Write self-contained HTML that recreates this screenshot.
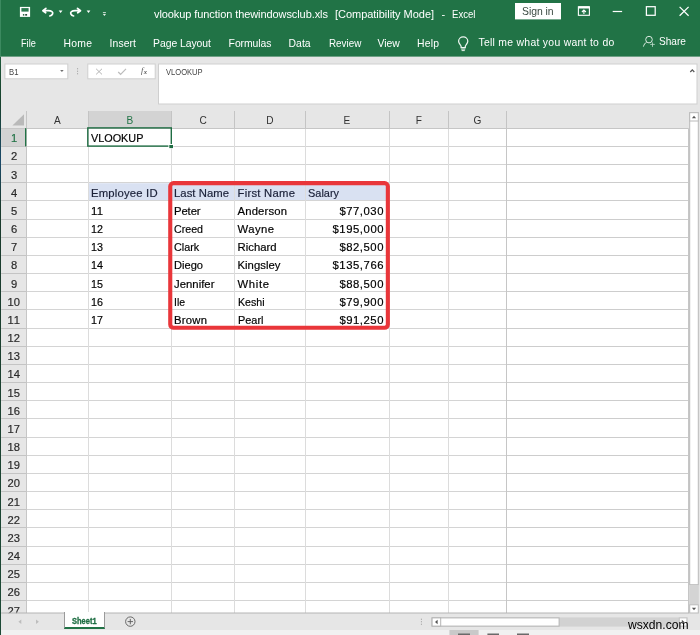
<!DOCTYPE html>
<html><head><meta charset="utf-8"><title>vlookup function thewindowsclub.xls - Excel</title>
<style>
html,body{margin:0;padding:0;}
body{width:700px;height:635px;position:relative;overflow:hidden;background:#e6e6e6;font-family:"Liberation Sans",sans-serif;}
.t{position:absolute;white-space:nowrap;line-height:20px;height:20px;}
.b{position:absolute;box-sizing:border-box;}
.c{-webkit-text-stroke:0.18px currentColor;}
svg{position:absolute;left:0;top:0;overflow:visible;}
</style></head><body><div id="app" style="position:absolute;left:0;top:0;width:700px;height:635px;overflow:hidden;will-change:transform;filter:blur(0.25px);">

<svg width="700" height="635"><rect x="0.00" y="0.00" width="700.00" height="56.60" fill="#217346"/><rect x="0.00" y="0.00" width="1.00" height="56.60" fill="#3c8a60"/></svg>
<div class="b" style="left:0;top:57px;width:1.2px;height:578px;background:linear-gradient(#1f5a3c,#17402c 8%,#1b4a6a 18%,#1a3a2c 26%,#1d4a36 100%);"></div>
<span class="t" style="left:154.00px;top:4px;font-size:11px;color:#fff;letter-spacing:-0.081px;">vlookup function thewindowsclub.xls</span>
<span class="t" style="left:335.00px;top:4px;font-size:11px;color:#fff;letter-spacing:-0.033px;">[Compatibility Mode]</span>
<span class="t" style="left:441.60px;top:4px;font-size:11px;color:#fff;">-</span>
<span class="t" style="left:452.00px;top:4px;font-size:11px;color:#fff;transform:scaleX(0.8707);transform-origin:0 0;">Excel</span>
<svg width="700" height="635"><rect x="515.00" y="3.00" width="46.00" height="16.40" fill="#fff"/></svg>
<span class="t" style="left:522.00px;top:2px;font-size:10.4px;color:#3b4a42;letter-spacing:-0.025px;">Sign in</span>
<span class="t" style="left:20.60px;top:34px;font-size:10.4px;color:#fff;transform:scaleX(0.8836);transform-origin:0 0;">File</span>
<span class="t" style="left:63.60px;top:34px;font-size:10.4px;color:#fff;letter-spacing:0.217px;">Home</span>
<span class="t" style="left:109.60px;top:34px;font-size:10.4px;color:#fff;letter-spacing:0.080px;">Insert</span>
<span class="t" style="left:153.00px;top:34px;font-size:10.4px;color:#fff;letter-spacing:-0.037px;">Page Layout</span>
<span class="t" style="left:228.60px;top:34px;font-size:10.4px;color:#fff;letter-spacing:-0.054px;">Formulas</span>
<span class="t" style="left:288.60px;top:34px;font-size:10.4px;color:#fff;">Data</span>
<span class="t" style="left:328.60px;top:34px;font-size:10.4px;color:#fff;transform:scaleX(0.9460);transform-origin:0 0;">Review</span>
<span class="t" style="left:377.60px;top:34px;font-size:10.4px;color:#fff;letter-spacing:-0.033px;">View</span>
<span class="t" style="left:417.00px;top:34px;font-size:10.4px;color:#fff;letter-spacing:0.208px;">Help</span>
<span class="t" style="left:478.40px;top:33px;font-size:10.4px;color:#fff;letter-spacing:0.293px;">Tell me what you want to do</span>
<span class="t" style="left:658.60px;top:32px;font-size:10.4px;color:#fff;transform:scaleX(0.9730);transform-origin:0 0;">Share</span>
<svg width="700" height="635"><rect x="4.90" y="64.00" width="62.90" height="14.80" fill="#fff" stroke="#cfcfcf" stroke-width="1.0"/><rect x="87.80" y="64.00" width="67.40" height="14.80" fill="#fff" stroke="#cfcfcf" stroke-width="1.0"/><rect x="158.50" y="64.00" width="538.50" height="40.00" fill="#fff" stroke="#cfcfcf" stroke-width="1.0"/></svg>
<span class="t" style="left:9.00px;top:62px;font-size:8.7px;color:#444;transform:scaleX(0.8847);transform-origin:0 0;">B1</span>
<span class="t" style="left:166.40px;top:62px;font-size:8.7px;color:#444;transform:scaleX(0.8714);transform-origin:0 0;">VLOOKUP</span>
<svg width="700" height="635"><rect x="26.30" y="128.20" width="661.70" height="485.00" fill="#fff"/><rect x="88.30" y="111.00" width="82.90" height="17.20" fill="#d3d3d3"/><rect x="1.20" y="128.20" width="25.10" height="18.17" fill="#d3d3d3"/><rect x="88.80" y="183.21" width="297.20" height="17.57" fill="#d9e1f2"/><line x1="26.30" y1="146.50" x2="506.60" y2="146.50" stroke="#d4d4d4" stroke-width="1"/><line x1="506.60" y1="146.50" x2="688.00" y2="146.50" stroke="#cdcdcd" stroke-width="1"/><line x1="1.20" y1="146.50" x2="26.30" y2="146.50" stroke="#c4c4c4" stroke-width="1"/><line x1="26.30" y1="164.50" x2="506.60" y2="164.50" stroke="#d4d4d4" stroke-width="1"/><line x1="506.60" y1="164.50" x2="688.00" y2="164.50" stroke="#cdcdcd" stroke-width="1"/><line x1="1.20" y1="164.50" x2="26.30" y2="164.50" stroke="#c4c4c4" stroke-width="1"/><line x1="26.30" y1="182.50" x2="506.60" y2="182.50" stroke="#d4d4d4" stroke-width="1"/><line x1="506.60" y1="182.50" x2="688.00" y2="182.50" stroke="#cdcdcd" stroke-width="1"/><line x1="1.20" y1="182.50" x2="26.30" y2="182.50" stroke="#c4c4c4" stroke-width="1"/><line x1="26.30" y1="200.50" x2="506.60" y2="200.50" stroke="#d4d4d4" stroke-width="1"/><line x1="506.60" y1="200.50" x2="688.00" y2="200.50" stroke="#cdcdcd" stroke-width="1"/><line x1="1.20" y1="200.50" x2="26.30" y2="200.50" stroke="#c4c4c4" stroke-width="1"/><line x1="26.30" y1="219.50" x2="506.60" y2="219.50" stroke="#d4d4d4" stroke-width="1"/><line x1="506.60" y1="219.50" x2="688.00" y2="219.50" stroke="#cdcdcd" stroke-width="1"/><line x1="1.20" y1="219.50" x2="26.30" y2="219.50" stroke="#c4c4c4" stroke-width="1"/><line x1="26.30" y1="237.50" x2="506.60" y2="237.50" stroke="#d4d4d4" stroke-width="1"/><line x1="506.60" y1="237.50" x2="688.00" y2="237.50" stroke="#cdcdcd" stroke-width="1"/><line x1="1.20" y1="237.50" x2="26.30" y2="237.50" stroke="#c4c4c4" stroke-width="1"/><line x1="26.30" y1="255.50" x2="506.60" y2="255.50" stroke="#d4d4d4" stroke-width="1"/><line x1="506.60" y1="255.50" x2="688.00" y2="255.50" stroke="#cdcdcd" stroke-width="1"/><line x1="1.20" y1="255.50" x2="26.30" y2="255.50" stroke="#c4c4c4" stroke-width="1"/><line x1="26.30" y1="273.50" x2="506.60" y2="273.50" stroke="#d4d4d4" stroke-width="1"/><line x1="506.60" y1="273.50" x2="688.00" y2="273.50" stroke="#cdcdcd" stroke-width="1"/><line x1="1.20" y1="273.50" x2="26.30" y2="273.50" stroke="#c4c4c4" stroke-width="1"/><line x1="26.30" y1="291.50" x2="506.60" y2="291.50" stroke="#d4d4d4" stroke-width="1"/><line x1="506.60" y1="291.50" x2="688.00" y2="291.50" stroke="#cdcdcd" stroke-width="1"/><line x1="1.20" y1="291.50" x2="26.30" y2="291.50" stroke="#c4c4c4" stroke-width="1"/><line x1="26.30" y1="309.50" x2="506.60" y2="309.50" stroke="#d4d4d4" stroke-width="1"/><line x1="506.60" y1="309.50" x2="688.00" y2="309.50" stroke="#cdcdcd" stroke-width="1"/><line x1="1.20" y1="309.50" x2="26.30" y2="309.50" stroke="#c4c4c4" stroke-width="1"/><line x1="26.30" y1="328.50" x2="506.60" y2="328.50" stroke="#d4d4d4" stroke-width="1"/><line x1="506.60" y1="328.50" x2="688.00" y2="328.50" stroke="#cdcdcd" stroke-width="1"/><line x1="1.20" y1="328.50" x2="26.30" y2="328.50" stroke="#c4c4c4" stroke-width="1"/><line x1="26.30" y1="346.50" x2="506.60" y2="346.50" stroke="#d4d4d4" stroke-width="1"/><line x1="506.60" y1="346.50" x2="688.00" y2="346.50" stroke="#cdcdcd" stroke-width="1"/><line x1="1.20" y1="346.50" x2="26.30" y2="346.50" stroke="#c4c4c4" stroke-width="1"/><line x1="26.30" y1="364.50" x2="506.60" y2="364.50" stroke="#d4d4d4" stroke-width="1"/><line x1="506.60" y1="364.50" x2="688.00" y2="364.50" stroke="#cdcdcd" stroke-width="1"/><line x1="1.20" y1="364.50" x2="26.30" y2="364.50" stroke="#c4c4c4" stroke-width="1"/><line x1="26.30" y1="382.50" x2="506.60" y2="382.50" stroke="#d4d4d4" stroke-width="1"/><line x1="506.60" y1="382.50" x2="688.00" y2="382.50" stroke="#cdcdcd" stroke-width="1"/><line x1="1.20" y1="382.50" x2="26.30" y2="382.50" stroke="#c4c4c4" stroke-width="1"/><line x1="26.30" y1="400.50" x2="506.60" y2="400.50" stroke="#d4d4d4" stroke-width="1"/><line x1="506.60" y1="400.50" x2="688.00" y2="400.50" stroke="#cdcdcd" stroke-width="1"/><line x1="1.20" y1="400.50" x2="26.30" y2="400.50" stroke="#c4c4c4" stroke-width="1"/><line x1="26.30" y1="418.50" x2="506.60" y2="418.50" stroke="#d4d4d4" stroke-width="1"/><line x1="506.60" y1="418.50" x2="688.00" y2="418.50" stroke="#cdcdcd" stroke-width="1"/><line x1="1.20" y1="418.50" x2="26.30" y2="418.50" stroke="#c4c4c4" stroke-width="1"/><line x1="26.30" y1="437.50" x2="506.60" y2="437.50" stroke="#d4d4d4" stroke-width="1"/><line x1="506.60" y1="437.50" x2="688.00" y2="437.50" stroke="#cdcdcd" stroke-width="1"/><line x1="1.20" y1="437.50" x2="26.30" y2="437.50" stroke="#c4c4c4" stroke-width="1"/><line x1="26.30" y1="455.50" x2="506.60" y2="455.50" stroke="#d4d4d4" stroke-width="1"/><line x1="506.60" y1="455.50" x2="688.00" y2="455.50" stroke="#cdcdcd" stroke-width="1"/><line x1="1.20" y1="455.50" x2="26.30" y2="455.50" stroke="#c4c4c4" stroke-width="1"/><line x1="26.30" y1="473.50" x2="506.60" y2="473.50" stroke="#d4d4d4" stroke-width="1"/><line x1="506.60" y1="473.50" x2="688.00" y2="473.50" stroke="#cdcdcd" stroke-width="1"/><line x1="1.20" y1="473.50" x2="26.30" y2="473.50" stroke="#c4c4c4" stroke-width="1"/><line x1="26.30" y1="491.50" x2="506.60" y2="491.50" stroke="#d4d4d4" stroke-width="1"/><line x1="506.60" y1="491.50" x2="688.00" y2="491.50" stroke="#cdcdcd" stroke-width="1"/><line x1="1.20" y1="491.50" x2="26.30" y2="491.50" stroke="#c4c4c4" stroke-width="1"/><line x1="26.30" y1="509.50" x2="506.60" y2="509.50" stroke="#d4d4d4" stroke-width="1"/><line x1="506.60" y1="509.50" x2="688.00" y2="509.50" stroke="#cdcdcd" stroke-width="1"/><line x1="1.20" y1="509.50" x2="26.30" y2="509.50" stroke="#c4c4c4" stroke-width="1"/><line x1="26.30" y1="527.50" x2="506.60" y2="527.50" stroke="#d4d4d4" stroke-width="1"/><line x1="506.60" y1="527.50" x2="688.00" y2="527.50" stroke="#cdcdcd" stroke-width="1"/><line x1="1.20" y1="527.50" x2="26.30" y2="527.50" stroke="#c4c4c4" stroke-width="1"/><line x1="26.30" y1="546.50" x2="506.60" y2="546.50" stroke="#d4d4d4" stroke-width="1"/><line x1="506.60" y1="546.50" x2="688.00" y2="546.50" stroke="#cdcdcd" stroke-width="1"/><line x1="1.20" y1="546.50" x2="26.30" y2="546.50" stroke="#c4c4c4" stroke-width="1"/><line x1="26.30" y1="564.50" x2="506.60" y2="564.50" stroke="#d4d4d4" stroke-width="1"/><line x1="506.60" y1="564.50" x2="688.00" y2="564.50" stroke="#cdcdcd" stroke-width="1"/><line x1="1.20" y1="564.50" x2="26.30" y2="564.50" stroke="#c4c4c4" stroke-width="1"/><line x1="26.30" y1="582.50" x2="506.60" y2="582.50" stroke="#d4d4d4" stroke-width="1"/><line x1="506.60" y1="582.50" x2="688.00" y2="582.50" stroke="#cdcdcd" stroke-width="1"/><line x1="1.20" y1="582.50" x2="26.30" y2="582.50" stroke="#c4c4c4" stroke-width="1"/><line x1="26.30" y1="600.50" x2="506.60" y2="600.50" stroke="#d4d4d4" stroke-width="1"/><line x1="506.60" y1="600.50" x2="688.00" y2="600.50" stroke="#cdcdcd" stroke-width="1"/><line x1="1.20" y1="600.50" x2="26.30" y2="600.50" stroke="#c4c4c4" stroke-width="1"/><line x1="88.50" y1="128.20" x2="88.50" y2="613.20" stroke="#dcdcdc" stroke-width="1"/><line x1="88.50" y1="111.00" x2="88.50" y2="128.20" stroke="#c4c4c4" stroke-width="1"/><line x1="171.50" y1="128.20" x2="171.50" y2="613.20" stroke="#dcdcdc" stroke-width="1"/><line x1="171.50" y1="111.00" x2="171.50" y2="128.20" stroke="#c4c4c4" stroke-width="1"/><line x1="234.50" y1="128.20" x2="234.50" y2="613.20" stroke="#dcdcdc" stroke-width="1"/><line x1="234.50" y1="111.00" x2="234.50" y2="128.20" stroke="#c4c4c4" stroke-width="1"/><line x1="305.50" y1="128.20" x2="305.50" y2="613.20" stroke="#dcdcdc" stroke-width="1"/><line x1="305.50" y1="111.00" x2="305.50" y2="128.20" stroke="#c4c4c4" stroke-width="1"/><line x1="389.50" y1="128.20" x2="389.50" y2="613.20" stroke="#dcdcdc" stroke-width="1"/><line x1="389.50" y1="111.00" x2="389.50" y2="128.20" stroke="#c4c4c4" stroke-width="1"/><line x1="448.50" y1="128.20" x2="448.50" y2="613.20" stroke="#dcdcdc" stroke-width="1"/><line x1="448.50" y1="111.00" x2="448.50" y2="128.20" stroke="#c4c4c4" stroke-width="1"/><line x1="506.50" y1="128.20" x2="506.50" y2="613.20" stroke="#c6c6c6" stroke-width="1"/><line x1="506.50" y1="111.00" x2="506.50" y2="128.20" stroke="#c4c4c4" stroke-width="1"/><line x1="26.50" y1="111.00" x2="26.50" y2="128.20" stroke="#c4c4c4" stroke-width="1"/><line x1="1.20" y1="128.50" x2="688.00" y2="128.50" stroke="#c6c6c6" stroke-width="1"/><line x1="26.50" y1="128.20" x2="26.50" y2="613.20" stroke="#c6c6c6" stroke-width="1"/><line x1="688.50" y1="128.20" x2="688.50" y2="613.20" stroke="#c6c6c6" stroke-width="1"/><path d="M24 114.2 L24 125.6 L12.4 125.6 Z" fill="#b9b9b9"/></svg>
<span class="t" style="left:53.92px;top:111px;font-size:10.1px;color:#333;">A</span>
<span class="t" style="left:126.38px;top:111px;font-size:10.1px;color:#217346;">B</span>
<span class="t" style="left:199.38px;top:111px;font-size:10.1px;color:#333;">C</span>
<span class="t" style="left:266.27px;top:111px;font-size:10.1px;color:#333;">D</span>
<span class="t" style="left:343.62px;top:111px;font-size:10.1px;color:#333;">E</span>
<span class="t" style="left:415.69px;top:111px;font-size:10.1px;color:#333;">F</span>
<span class="t" style="left:473.61px;top:111px;font-size:10.1px;color:#333;">G</span>
<span class="t c" style="left:10.90px;top:128px;font-size:11.2px;color:#217346;">1</span>
<span class="t c" style="left:10.90px;top:146px;font-size:11.2px;color:#2a2a2a;">2</span>
<span class="t c" style="left:10.90px;top:165px;font-size:11.2px;color:#2a2a2a;">3</span>
<span class="t c" style="left:10.90px;top:183px;font-size:11.2px;color:#2a2a2a;">4</span>
<span class="t c" style="left:10.90px;top:201px;font-size:11.2px;color:#2a2a2a;">5</span>
<span class="t c" style="left:10.90px;top:219px;font-size:11.2px;color:#2a2a2a;">6</span>
<span class="t c" style="left:10.90px;top:237px;font-size:11.2px;color:#2a2a2a;">7</span>
<span class="t c" style="left:10.90px;top:255px;font-size:11.2px;color:#2a2a2a;">8</span>
<span class="t c" style="left:10.90px;top:274px;font-size:11.2px;color:#2a2a2a;">9</span>
<span class="t c" style="left:7.40px;top:292px;font-size:11.2px;color:#2a2a2a;letter-spacing:0.100px;">10</span>
<span class="t c" style="left:7.40px;top:310px;font-size:11.2px;color:#2a2a2a;letter-spacing:0.975px;">11</span>
<span class="t c" style="left:7.40px;top:328px;font-size:11.2px;color:#2a2a2a;letter-spacing:0.100px;">12</span>
<span class="t c" style="left:7.40px;top:346px;font-size:11.2px;color:#2a2a2a;letter-spacing:0.100px;">13</span>
<span class="t c" style="left:7.40px;top:364px;font-size:11.2px;color:#2a2a2a;letter-spacing:0.100px;">14</span>
<span class="t c" style="left:7.40px;top:383px;font-size:11.2px;color:#2a2a2a;letter-spacing:0.100px;">15</span>
<span class="t c" style="left:7.40px;top:401px;font-size:11.2px;color:#2a2a2a;letter-spacing:0.100px;">16</span>
<span class="t c" style="left:7.40px;top:419px;font-size:11.2px;color:#2a2a2a;letter-spacing:0.100px;">17</span>
<span class="t c" style="left:7.40px;top:437px;font-size:11.2px;color:#2a2a2a;letter-spacing:0.100px;">18</span>
<span class="t c" style="left:7.40px;top:455px;font-size:11.2px;color:#2a2a2a;letter-spacing:0.100px;">19</span>
<span class="t c" style="left:7.40px;top:473px;font-size:11.2px;color:#2a2a2a;letter-spacing:0.100px;">20</span>
<span class="t c" style="left:7.40px;top:492px;font-size:11.2px;color:#2a2a2a;letter-spacing:0.100px;">21</span>
<span class="t c" style="left:7.40px;top:510px;font-size:11.2px;color:#2a2a2a;letter-spacing:0.100px;">22</span>
<span class="t c" style="left:7.40px;top:528px;font-size:11.2px;color:#2a2a2a;letter-spacing:0.100px;">23</span>
<span class="t c" style="left:7.40px;top:546px;font-size:11.2px;color:#2a2a2a;letter-spacing:0.100px;">24</span>
<span class="t c" style="left:7.40px;top:564px;font-size:11.2px;color:#2a2a2a;letter-spacing:0.100px;">25</span>
<span class="t c" style="left:7.40px;top:582px;font-size:11.2px;color:#2a2a2a;letter-spacing:0.100px;">26</span>
<span class="t c" style="left:7.40px;top:601px;font-size:11.2px;color:#2a2a2a;letter-spacing:0.100px;">27</span>
<svg width="700" height="635"><rect x="1.20" y="613.20" width="699.00" height="16.80" fill="#e6e6e6"/><line x1="1.2" y1="613" x2="689" y2="613" stroke="#b4b4b4" stroke-width="1"/></svg>
<span class="t c" style="left:90.60px;top:128px;font-size:11.3px;color:#000;transform:scaleX(0.9593);transform-origin:0 0;">VLOOKUP</span>
<span class="t c" style="left:91.00px;top:183px;font-size:11.3px;color:#1a2038;letter-spacing:0.188px;">Employee ID</span>
<span class="t c" style="left:174.00px;top:183px;font-size:11.3px;color:#1a2038;letter-spacing:0.047px;">Last Name</span>
<span class="t c" style="left:237.50px;top:183px;font-size:11.3px;color:#1a2038;letter-spacing:0.250px;">First Name</span>
<span class="t c" style="left:308.00px;top:183px;font-size:11.3px;color:#1a2038;transform:scaleX(0.9688);transform-origin:0 0;">Salary</span>
<span class="t c" style="left:91.00px;top:201px;font-size:11.3px;color:#000;letter-spacing:0.250px;">11</span>
<span class="t c" style="left:174.00px;top:201px;font-size:11.3px;color:#000;letter-spacing:-0.100px;">Peter</span>
<span class="t c" style="left:237.50px;top:201px;font-size:11.3px;color:#000;letter-spacing:0.161px;">Anderson</span>
<span class="t c" style="left:339.40px;top:201px;font-size:11.3px;color:#000;letter-spacing:0.538px;">$77,030</span>
<span class="t c" style="left:91.00px;top:219px;font-size:11.3px;color:#000;transform:scaleX(0.9505);transform-origin:0 0;">12</span>
<span class="t c" style="left:174.00px;top:219px;font-size:11.3px;color:#000;transform:scaleX(0.9431);transform-origin:0 0;">Creed</span>
<span class="t c" style="left:237.50px;top:219px;font-size:11.3px;color:#000;letter-spacing:0.438px;">Wayne</span>
<span class="t c" style="left:332.50px;top:219px;font-size:11.3px;color:#000;letter-spacing:0.554px;">$195,000</span>
<span class="t c" style="left:91.00px;top:237px;font-size:11.3px;color:#000;transform:scaleX(0.9505);transform-origin:0 0;">13</span>
<span class="t c" style="left:174.00px;top:237px;font-size:11.3px;color:#000;transform:scaleX(0.9585);transform-origin:0 0;">Clark</span>
<span class="t c" style="left:237.50px;top:237px;font-size:11.3px;color:#000;letter-spacing:0.038px;">Richard</span>
<span class="t c" style="left:339.40px;top:237px;font-size:11.3px;color:#000;letter-spacing:0.538px;">$82,500</span>
<span class="t c" style="left:91.00px;top:255px;font-size:11.3px;color:#000;transform:scaleX(0.9505);transform-origin:0 0;">14</span>
<span class="t c" style="left:174.00px;top:255px;font-size:11.3px;color:#000;transform:scaleX(0.9831);transform-origin:0 0;">Diego</span>
<span class="t c" style="left:237.50px;top:255px;font-size:11.3px;color:#000;letter-spacing:0.036px;">Kingsley</span>
<span class="t c" style="left:332.50px;top:255px;font-size:11.3px;color:#000;letter-spacing:0.554px;">$135,766</span>
<span class="t c" style="left:91.00px;top:274px;font-size:11.3px;color:#000;transform:scaleX(0.9505);transform-origin:0 0;">15</span>
<span class="t c" style="left:174.00px;top:274px;font-size:11.3px;color:#000;letter-spacing:0.036px;">Jennifer</span>
<span class="t c" style="left:237.50px;top:274px;font-size:11.3px;color:#000;letter-spacing:0.656px;">White</span>
<span class="t c" style="left:339.40px;top:274px;font-size:11.3px;color:#000;letter-spacing:0.538px;">$88,500</span>
<span class="t c" style="left:91.00px;top:292px;font-size:11.3px;color:#000;transform:scaleX(0.9505);transform-origin:0 0;">16</span>
<span class="t c" style="left:174.00px;top:292px;font-size:11.3px;color:#000;transform:scaleX(0.9263);transform-origin:0 0;">Ile</span>
<span class="t c" style="left:237.50px;top:292px;font-size:11.3px;color:#000;transform:scaleX(0.9381);transform-origin:0 0;">Keshi</span>
<span class="t c" style="left:339.40px;top:292px;font-size:11.3px;color:#000;letter-spacing:0.538px;">$79,900</span>
<span class="t c" style="left:91.00px;top:310px;font-size:11.3px;color:#000;transform:scaleX(0.9505);transform-origin:0 0;">17</span>
<span class="t c" style="left:174.00px;top:310px;font-size:11.3px;color:#000;letter-spacing:0.250px;">Brown</span>
<span class="t c" style="left:237.50px;top:310px;font-size:11.3px;color:#000;transform:scaleX(0.9668);transform-origin:0 0;">Pearl</span>
<span class="t c" style="left:339.40px;top:310px;font-size:11.3px;color:#000;letter-spacing:0.538px;">$91,250</span>
<svg width="700" height="635" viewBox="0 0 700 635"><rect x="87.8" y="127.9" width="83.5" height="18.2" fill="none" stroke="#1f6d43" stroke-width="1.4"/><rect x="168.4" y="144" width="5" height="4.6" fill="#fff"/><rect x="169.3" y="145" width="3.7" height="3.1" fill="#1f6d43"/><rect x="25.00" y="128.20" width="1.30" height="18.17" fill="#217346"/><rect x="170.25" y="183.15" width="217.6" height="144.6" rx="3.2" ry="3.2" fill="none" stroke="#e9363a" stroke-width="4.1"/><rect x="689.70" y="112.70" width="8.60" height="472.00" fill="#fff" stroke="#b9b9b9" stroke-width="1.0"/><rect x="689.70" y="112.70" width="8.60" height="8.30" fill="#fff" stroke="#b9b9b9" stroke-width="1.0"/><rect x="689.20" y="585.00" width="9.60" height="19.50" fill="#d4d4d4"/><rect x="689.70" y="604.80" width="8.60" height="8.20" fill="#fff" stroke="#b9b9b9" stroke-width="1.0"/><rect x="431.60" y="617.40" width="256.00" height="9.20" fill="#d2d2d2"/><rect x="432.10" y="617.90" width="127.00" height="8.20" fill="#fff" stroke="#b4b4b4" stroke-width="1.0"/><rect x="432.10" y="617.90" width="8.60" height="8.20" fill="#fff" stroke="#b4b4b4" stroke-width="1.0"/><rect x="679.30" y="617.90" width="7.60" height="8.20" fill="#fff" stroke="#c4c4c4" stroke-width="1.0"/></svg>
<div class="b" style="left:64px;top:612.4px;width:41px;height:16.4px;background:#fff;border-left:1px solid #9a9a9a;border-right:1px solid #9a9a9a;border-bottom:2px solid #217346;"></div>
<span class="t" style="left:71.80px;top:611px;font-size:8.3px;color:#1e6e43;font-weight:bold;-webkit-text-stroke:0.3px #1e6e43;transform:scaleX(0.9028);transform-origin:0 0;">Sheet1</span>
<svg width="700" height="635"><rect x="1.20" y="630.00" width="699.00" height="5.00" fill="#f1f1f1"/><rect x="449.40" y="630.00" width="29.20" height="5.00" fill="#c9c9c9"/><rect x="458.00" y="633.50" width="12.00" height="2.00" fill="#6a6a6a"/><rect x="487.40" y="633.50" width="11.60" height="2.00" fill="#6a6a6a"/><rect x="517.00" y="633.50" width="12.00" height="2.00" fill="#6a6a6a"/></svg>
<span class="t" style="left:627.51px;top:615px;font-size:13.6px;color:#000;transform:scaleX(0.8910);transform-origin:0 0;">wsxdn.com</span>
<svg width="700" height="635" viewBox="0 0 700 635"><rect x="19.9" y="6.9" width="10.2" height="10" fill="#fff"/><rect x="21.4" y="8.1" width="7.2" height="3.5" fill="#2a7a4e"/><rect x="22.9" y="14.1" width="1.4" height="1.5" fill="#1a5a36"/><rect x="25.2" y="14.1" width="1.9" height="1.5" fill="#10381f"/><path d="M45.9 8.3 L42.9 10.7 L45.7 12.8 M43.4 10.7 L48.3 10.7 C51.6 10.7 53.3 12.3 52.6 13.9 C52.1 15.1 51.2 15.8 49.8 16" fill="none" stroke="#fff" stroke-width="1.7" stroke-linecap="round" stroke-linejoin="round"/><path d="M58.7 10.4 L62.5 10.4 L60.6 13 Z" fill="#fff"/><path d="M77.5 8.3 L80.5 10.7 L77.7 12.8 M80.0 10.7 L75.1 10.7 C71.8 10.7 70.1 12.3 70.8 13.9 C71.3 15.1 72.2 15.8 73.6 16" fill="none" stroke="#fff" stroke-width="1.7" stroke-linecap="round" stroke-linejoin="round"/><path d="M86.6 10.4 L90.4 10.4 L88.5 13 Z" fill="#fff"/><rect x="102.9" y="12.2" width="3" height="0.9" fill="#e8f0ea"/><path d="M102.8 14.1 L106 14.1 L104.4 15.9 Z" fill="#e8f0ea"/></svg><svg width="700" height="635" viewBox="0 0 700 635"><rect x="578.4" y="6.8" width="11" height="8.5" fill="none" stroke="#fff" stroke-width="1.1"/><rect x="578.4" y="6.3" width="11" height="2.2" fill="#fff"/><path d="M583.9 14 L583.9 10.6 M581.9 12 L583.9 10 L585.9 12" fill="none" stroke="#fff" stroke-width="1.1"/><rect x="612.7" y="10.9" width="9.4" height="1.2" fill="#fff"/><rect x="646.4" y="6.7" width="8.8" height="8.6" fill="none" stroke="#fff" stroke-width="1.25"/><path d="M679.6 6.9 L688.6 15.7 M688.6 6.9 L679.6 15.7" fill="none" stroke="#fff" stroke-width="1.25"/><path d="M461.1 47.6 L461.1 46.4 C461 45 458.6 43.8 458.6 41.3 C458.6 38.6 460.7 36.9 463.2 36.9 C465.7 36.9 467.8 38.6 467.8 41.3 C467.8 43.8 465.4 45 465.3 46.4 L465.3 47.6 Z" fill="none" stroke="#eef6f1" stroke-width="1.25"/><path d="M461.2 49.1 L465.2 49.1 M461.6 50.6 L464.8 50.6" fill="none" stroke="#e9f3ed" stroke-width="1"/><circle cx="649" cy="39.6" r="3.3" fill="none" stroke="#dcebe2" stroke-width="1"/><path d="M646.6 42.2 C645 43 644 44.6 643.4 46.6" fill="none" stroke="#dcebe2" stroke-width="1"/><path d="M650.2 44.4 L654.8 44.4 M652.5 42.4 L652.5 46.9" fill="none" stroke="#c4decf" stroke-width="0.8"/></svg><svg width="700" height="635" viewBox="0 0 700 635"><path d="M60.1 69.9 L63.7 69.9 L61.9 72 Z" fill="#707070"/><rect x="77" y="68.2" width="1.1" height="1.1" fill="#a6a6a6"/><rect x="77" y="70.7" width="1.1" height="1.1" fill="#a6a6a6"/><rect x="77" y="73.2" width="1.1" height="1.1" fill="#a6a6a6"/><path d="M96.1 68.8 L102 74.4 M102 68.8 L96.1 74.4" fill="none" stroke="#b4b4b4" stroke-width="1"/><path d="M118.2 72 L120.6 74.3 L126 68.8" fill="none" stroke="#bcbcbc" stroke-width="1.2"/><path d="M690.3 72 L692.3 69.8 L694.3 72" fill="none" stroke="#555" stroke-width="1.2"/></svg><span class="t" style="left:141.1px;top:59.6px;font-family:'Liberation Serif',serif;font-style:italic;font-size:8.6px;color:#555;letter-spacing:0.3px;">f<span style="font-size:6.6px;position:relative;top:1px;font-weight:bold;">x</span></span><svg width="700" height="635" viewBox="0 0 700 635"><path d="M21.3 619.6 L21.3 624 L18.4 621.8 Z" fill="#bdbdbd"/><path d="M36 619.6 L36 624 L38.9 621.8 Z" fill="#bdbdbd"/><circle cx="130.3" cy="621.6" r="4.7" fill="none" stroke="#5a5a5a" stroke-width="0.9"/><path d="M127.6 621.6 L133 621.6 M130.3 618.9 L130.3 624.3" stroke="#5a5a5a" stroke-width="0.9" fill="none"/><rect x="420.9" y="618.7" width="1.1" height="1.1" fill="#a6a6a6"/><rect x="420.9" y="621.2" width="1.1" height="1.1" fill="#a6a6a6"/><rect x="420.9" y="623.7" width="1.1" height="1.1" fill="#a6a6a6"/><path d="M437.6 619.8 L437.6 624.2 L435 622 Z" fill="#555"/><path d="M691.9 118.2 L696.1 118.2 L694 115.8 Z" fill="#555"/><path d="M691.9 607.8 L696.1 607.8 L694 610.3 Z" fill="#555"/><path d="M681.8 619.8 L681.8 624.2 L684.4 622 Z" fill="#555"/></svg>
</div></body></html>
